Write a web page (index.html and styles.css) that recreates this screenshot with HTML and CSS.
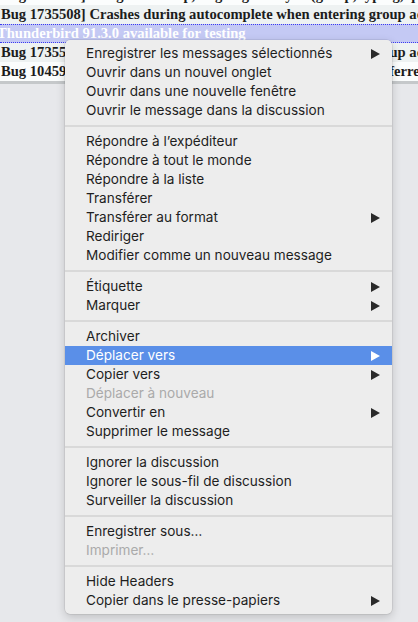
FILE: index.html
```html
<!DOCTYPE html>
<html lang="fr">
<head>
<meta charset="utf-8">
<title>Menu contextuel</title>
<link rel="stylesheet" href="styles.css">
</head>
<body>
<div class="threads">
  <div class="row">Bug 1734917] Hang on startup, bug in gloda sync (group, typing, query, sp)</div>
  <div class="row odd">Bug 1735508] Crashes during autocomplete when entering group address</div>
  <div class="row selected">Thunderbird 91.3.0 available for testing</div>
  <div class="row odd">Bug 1735508] Crashes during autocomplete when entering group address</div>
  <div class="row">Bug 1045993] Allow us to define which identities should be preferred</div>
</div>

<div class="menu">
  <div class="item sub"><span>Enregistrer les messages sélectionnés</span><span class="arrow"></span></div>
  <div class="item">Ouvrir dans un nouvel onglet</div>
  <div class="item">Ouvrir dans une nouvelle fenêtre</div>
  <div class="item">Ouvrir le message dans la discussion</div>
  <div class="sep"></div>
  <div class="item">Répondre à l’expéditeur</div>
  <div class="item">Répondre à tout le monde</div>
  <div class="item">Répondre à la liste</div>
  <div class="item">Transférer</div>
  <div class="item sub"><span>Transférer au format</span><span class="arrow"></span></div>
  <div class="item">Rediriger</div>
  <div class="item">Modifier comme un nouveau message</div>
  <div class="sep"></div>
  <div class="item sub"><span>Étiquette</span><span class="arrow"></span></div>
  <div class="item sub"><span>Marquer</span><span class="arrow"></span></div>
  <div class="sep"></div>
  <div class="item">Archiver</div>
  <div class="item sub active"><span>Déplacer vers</span><span class="arrow"></span></div>
  <div class="item sub"><span>Copier vers</span><span class="arrow"></span></div>
  <div class="item disabled">Déplacer à nouveau</div>
  <div class="item sub"><span>Convertir en</span><span class="arrow"></span></div>
  <div class="item">Supprimer le message</div>
  <div class="sep"></div>
  <div class="item">Ignorer la discussion</div>
  <div class="item">Ignorer le sous-fil de discussion</div>
  <div class="item">Surveiller la discussion</div>
  <div class="sep"></div>
  <div class="item">Enregistrer sous…</div>
  <div class="item disabled">Imprimer…</div>
  <div class="sep"></div>
  <div class="item">Hide Headers</div>
  <div class="item sub"><span>Copier dans le presse-papiers</span><span class="arrow"></span></div>
</div>
</body>
</html>
```

FILE: styles.css
```css
html, body {
  margin: 0;
  padding: 0;
}
body {
  width: 418px;
  height: 622px;
  overflow: hidden;
  background: #e7e8eb;
  position: relative;
}
.threads {
  margin-top: -14px;
  border-bottom: 3px solid #c5c8ca;
  background: #fbfdfd;
}
.row {
  height: 19px;
  line-height: 19px;
  white-space: nowrap;
  overflow: hidden;
  font-family: "Liberation Serif", serif;
  font-weight: bold;
  font-size: 14.6px;
  color: #1c1c1c;
  background: #fbfdfd;
  padding-left: 1px;
}
.row.odd {
  background: #eef2f2;
}
.row.selected {
  background: #c4c9f4;
  color: #ffffff;
  border-top: 1px dotted #3b3bf0;
  border-bottom: 1px dotted #3b3bf0;
  height: 17px;
  line-height: 17px;
  padding-left: 0;
  text-indent: -3px;
}
.menu {
  position: absolute;
  left: 65px;
  top: 40px;
  width: 327px;
  padding: 4px 0 4px;
  background: #ededed;
  border-radius: 5px;
  box-shadow: 0 0 0 0.5px rgba(0,0,0,0.12), 0 3px 10px rgba(0,0,0,0.18);
  font-family: "Inter", "Liberation Sans", sans-serif;
  font-size: 13.6px;
  color: #1e1e1e;
}
.item {
  height: 19px;
  line-height: 19px;
  padding: 0 12px 0 21px;
  display: flex;
  justify-content: space-between;
  align-items: center;
  white-space: nowrap;
}
.item.active {
  background: #5a8fe8;
  color: #ffffff;
}
.item.disabled {
  color: #aaaaaa;
}
.arrow {
  width: 0;
  height: 0;
  border-top: 5px solid transparent;
  border-bottom: 5px solid transparent;
  border-left: 9px solid #2a2a2a;
}
.item.active .arrow {
  border-left-color: #ffffff;
}
.sep {
  height: 2px;
  margin: 5px 0;
  background: #d9d9d9;
}
```
